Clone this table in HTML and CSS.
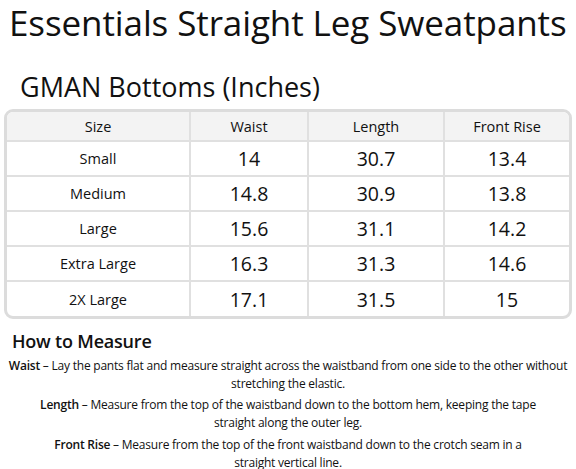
FILE: index.html
```html
<!DOCTYPE html>
<html lang="en">
<head>
    <meta charset="UTF-8">
    <meta name="viewport" content="width=device-width, initial-scale=1.0">
    <title>Essentials Straight Leg Sweatpants - Size Guide</title>
    <link rel="stylesheet" href="styles.css">
</head>
<body>

    <h1 class="product-title">Essentials Straight Leg Sweatpants</h1>

    <!-- Tabela de medidas -->
    <h2 class="chart-title">GMAN Bottoms (Inches)</h2>
    <div class="chart-frame">
        <table class="size-chart">
            <thead>
                <tr>
                    <th class="col-size">Size</th>
                    <th class="col-waist">Waist</th>
                    <th class="col-length">Length</th>
                    <th class="col-rise">Front Rise</th>
                </tr>
            </thead>
            <tbody>
                <tr><td>Small</td><td>14</td><td>30.7</td><td>13.4</td></tr>
                <tr><td>Medium</td><td>14.8</td><td>30.9</td><td>13.8</td></tr>
                <tr><td>Large</td><td>15.6</td><td>31.1</td><td>14.2</td></tr>
                <tr><td>Extra Large</td><td>16.3</td><td>31.3</td><td>14.6</td></tr>
                <tr><td>2X Large</td><td>17.1</td><td>31.5</td><td>15</td></tr>
            </tbody>
        </table>
    </div>

    <!-- Como medir -->
    <h3 class="measure-title">How to Measure</h3>
    <p class="measure-text"><strong>Waist</strong> – Lay the pants flat and measure straight across the waistband from one side to the other without stretching the elastic.</p>
    <p class="measure-text length"><strong>Length</strong> – Measure from the top of the waistband down to the bottom hem, keeping the tape straight along the outer leg.</p>
    <p class="measure-text rise"><strong>Front Rise</strong> – Measure from the top of the front waistband down to the crotch seam in a straight vertical line.</p>

</body>
</html>
```

FILE: styles.css
```css
* {
    margin: 0;
    padding: 0;
    box-sizing: border-box;
}

body {
    font-family: 'Open Sans', 'Noto Sans', sans-serif;
    color: #111;
    background: #fff;
    width: 576px;
}

/* Título do produto */
.product-title {
    font-size: 35px;
    font-weight: 400;
    line-height: 44px;
    padding: 1px 0 0 9px;
    white-space: nowrap;
    letter-spacing: -0.1px;
}

.chart-title {
    font-size: 27px;
    font-weight: 400;
    line-height: 34px;
    margin-top: 25px;
    padding-left: 20px;
}

/* Moldura da tabela */
.chart-frame {
    margin: 5px 4px 0 4px;
    border: 3px solid #dcdcdc;
    border-radius: 9px;
    overflow: hidden;
}

.size-chart {
    width: 100%;
    border-collapse: collapse;
    table-layout: fixed;
}

.size-chart th,
.size-chart td {
    text-align: center;
    border-left: 2px solid #e0e0e0;
    border-top: 2px solid #e0e0e0;
}

.size-chart tr > :first-child {
    border-left: none;
}

.size-chart thead th {
    border-top: none;
    background: #f3f3f3;
    font-weight: 400;
    font-size: 14.5px;
    height: 29px;
}

.size-chart td {
    height: 35px;
    font-size: 19.5px;
}

.size-chart td:first-child {
    font-size: 14.5px;
}

.col-size { width: 183px; }
.col-waist { width: 118px; }
.col-length { width: 136px; }

/* Como medir */
.measure-title {
    font-size: 18px;
    font-weight: 600;
    line-height: 24px;
    margin-top: 10px;
    padding-left: 12px;
    letter-spacing: -0.2px;
}

.measure-text {
    font-size: 12px;
    line-height: 18px;
    text-align: center;
    margin-top: 3.5px;
    letter-spacing: -0.22px;
}

.measure-text.length {
    padding: 0 28px;
}

.measure-text.rise {
    padding: 0 46px;
}

.measure-text strong {
    font-weight: 600;
}
```
